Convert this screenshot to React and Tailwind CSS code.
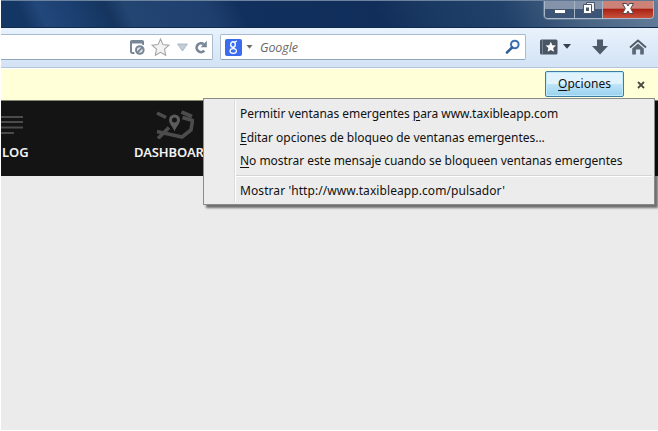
import React from "react";

function WindowControls() {
  return (
    <div className="mr-[4px] flex h-[18px] w-[110px] overflow-hidden rounded-b-[4px] border border-t-0 border-[#a9b7c8] shadow-[0_0_0_1px_#5f7793]">
      <div className="flex w-[30px] justify-center border-r border-[#a9b5c5] bg-linear-to-b from-[#8493aa] from-45% to-[#3c5475] to-50%">
        <svg width="14" height="17" viewBox="0 0 14 17">
          <rect x="1.500" y="8.500" width="11" height="4" fill="#fff" stroke="#4b5568" />
        </svg>
      </div>
      <div className="flex w-[28px] justify-center border-r border-[#a9b5c5] bg-linear-to-b from-[#8493aa] from-45% to-[#3c5475] to-50%">
        <svg width="14" height="17" viewBox="0 0 14 17">
          <path d="M4.500 1.500h8v9h-8z" fill="#eef0f3" stroke="#4b566a" />
          <path d="M1.500 3.500h8v9h-8z" fill="#fff" stroke="#4b566a" />
          <rect x="4" y="6.500" width="3" height="3.500" fill="#4b566a" />
        </svg>
      </div>
      <div className="flex flex-1 justify-center bg-linear-to-b from-[#cc8277] from-42% via-[#a91f13] via-48% to-[#c8503a]">
        <svg width="14" height="17" viewBox="0 0 14 17">
          <path d="M1.500 2.500h4L7 5l1.500-2.500h4L9.700 7.500l2.800 5h-4L7 10l-1.500 2.500h-4l2.800-5z" fill="#fff" stroke="#4e4650" strokeWidth="1" />
        </svg>
      </div>
    </div>
  );
}

function AddressBar() {
  return (
    <div className="flex h-[26px] w-[212px] items-center rounded-r-[2px] border border-l-0 border-[#a9bccf] border-b-[#8fa5bb] bg-white pl-[128px]">
      <svg width="16" height="16" viewBox="0 0 16 16" className="shrink-0">
        <path d="M5.500 14H3.500a1.500 1.500 0 0 1-1.500-1.500V3h12v3" fill="none" stroke="#788797" strokeWidth="2" />
        <path d="M1 3a2 2 0 0 1 2-2h10a2 2 0 0 1 2 2v1.500H1z" fill="#788797" />
        <circle cx="10.800" cy="11" r="4" fill="#e4e8ec" stroke="#fff" strokeWidth="4" />
        <circle cx="10.800" cy="11" r="3.800" fill="#e4e8ec" stroke="#788797" strokeWidth="2" />
        <path d="M8.200 13.600l5.200-5.200" stroke="#788797" strokeWidth="1.900" />
      </svg>
      <svg width="20" height="18" viewBox="0 0 20 18" className="ml-[6px] shrink-0">
        <path d="M9.500 1l2.400 5.600 6 .6-4.400 4 1.200 6.100-5.200-3-5.200 3 1.200-6.100-4.400-4 6-.6z" fill="#f3f3f3" stroke="#a6a6a6" strokeWidth="1.100" />
      </svg>
      <svg width="12" height="9" viewBox="0 0 12 9" className="ml-[6px] mt-[1px] shrink-0">
        <path d="M.6 1h9.800L5.500 8z" fill="#c3ced9" stroke="#a1afbd" strokeWidth=".8" />
      </svg>
      <svg width="14" height="14" viewBox="0 0 14 14" className="ml-[5px] shrink-0">
        <path d="M9.700 4.200A4.400 4.400 0 1 0 10.300 10.700" fill="none" stroke="#788797" strokeWidth="2.700" />
        <path d="M12.800.800v6.400H6.600z" fill="#788797" />
      </svg>
    </div>
  );
}

function SearchBox() {
  return (
    <div className="ml-[7px] flex h-[26px] w-[306px] items-center rounded-[2px] border border-[#a9bccf] border-b-[#8fa5bb] bg-white pl-[4px]">
      <div className="flex h-[17px] w-[17px] items-center justify-center rounded-[2px] bg-[#3a6cf0]">
        <svg width="11" height="15" viewBox="0 0 11 15" fill="none" stroke="#fff">
          <ellipse cx="5" cy="4.500" rx="2.300" ry="2.700" strokeWidth="1.400" />
          <ellipse cx="5.200" cy="11" rx="3.200" ry="2.400" strokeWidth="1.200" />
          <path d="M7 2l2-1M5 7.200l1.500 1.500" strokeWidth="1.200" />
        </svg>
      </div>
      <svg width="7" height="4" viewBox="0 0 7 4" className="ml-[4px]">
        <path d="M.5 0h6l-3 3.700z" fill="#6b6b6b" />
      </svg>
      <span className="ml-[7px] mt-[2px] w-[210px] font-['Open_Sans',sans-serif] text-[12.500px] italic tracking-[-0.100px] text-[#686868]">Google</span>
      <svg width="16" height="16" viewBox="0 0 16 16" className="ml-[35px] mt-[-1px]">
        <circle cx="9.800" cy="5.500" r="3.800" fill="#f5faff" stroke="#3a70b0" strokeWidth="2" />
        <path d="M7 8.500L2 13.500" stroke="#315f9e" strokeWidth="2.600" strokeLinecap="round" />
      </svg>
    </div>
  );
}

function ToolbarIcons() {
  return (
    <>
      <svg width="18" height="16" viewBox="0 0 18 16" className="ml-[14px]">
        <rect x="0" y=".500" width="17.500" height="15" rx="1.500" fill="#495663" />
        <path d="M2.500 1v14" stroke="#76838e" />
        <path d="M10.800 2.800l1.500 3.400 3.700.4-2.800 2.500.8 3.700-3.200-1.900-3.200 1.900.8-3.700-2.800-2.500 3.700-.4z" fill="#fff" />
      </svg>
      <svg width="8" height="5" viewBox="0 0 8 5" className="mb-[1px] ml-[5px]">
        <path d="M0 0h8L4 4.800z" fill="#333f4b" />
      </svg>
      <svg width="16" height="16" viewBox="0 0 16 16" className="ml-[21px]">
        <path d="M5 .5h6v6.500h5L8 15.500 0 7h5z" fill="#4d5b69" />
      </svg>
      <svg width="18" height="16" viewBox="0 0 18 16" className="ml-[21px]">
        <path d="M1 8.500l8-7 8 7" fill="none" stroke="#4d5a66" strokeWidth="1.800" />
        <path d="M3.200 9.500L9 4.600l5.800 4.900v6h-3.600V10.500H6.900v5H3.200z" fill="#5a6874" />
      </svg>
    </>
  );
}

const menuText = "ml-[4px] whitespace-nowrap font-['Noto_Sans',sans-serif] text-[12px] leading-[18px] text-[#111]";

function PopupMenu() {
  return (
    <div className="absolute left-[202px] top-[98px] flex h-[107px] w-[452px] border border-[#8b8b8b] bg-[#ececec] p-[2px] shadow-[3px_3px_2px_#00000088]">
      <div className="w-[29px] shrink-0 border-r border-[#dadada]" />
      <div className="flex flex-1 flex-col border-l border-white">
        <div className={menuText + " mt-[4px] h-[23.500px] tracking-[-0.050px]"}>
          Permitir ventanas emergentes <u className="underline-offset-2">p</u>ara www.taxibleapp.com
        </div>
        <div className={menuText + " h-[23.500px] tracking-[-0.030px]"}>
          <u className="underline-offset-2">E</u>ditar opciones de bloqueo de ventanas emergentes...
        </div>
        <div className={menuText + " h-[23px] tracking-[-0.040px]"}>
          <u className="underline-offset-2">N</u>o mostrar este mensaje cuando se bloqueen ventanas emergentes
        </div>
        <div className="h-[2px] shrink-0 border-b border-t border-b-white border-t-[#d5d5d5]" />
        <div className={menuText + " mt-[5px] tracking-[0.080px]"}>Mostrar 'http://www.taxibleapp.com/pulsador'</div>
      </div>
    </div>
  );
}

function SiteHeader() {
  return (
    <div className="flex h-[75px] overflow-hidden bg-[#141414] font-['Noto_Sans',sans-serif] text-[13px] font-semibold text-[#f2f2f2]">
      <div className="w-[133px]">
        <svg width="22" height="20" viewBox="0 0 22 20" className="mt-[14px]">
          <path d="M0 2h22M0 7h22M0 12.500h22M0 18h13" stroke="#4b4b4b" strokeWidth="2" />
        </svg>
        <div className="ml-[1px] mt-[8px] leading-[18px] tracking-[0.100px]">LOG</div>
      </div>
      <div className="w-[90px]">
        <svg width="38" height="30" viewBox="0 0 38 30" className="ml-[22px] mt-[8px]" fill="none" stroke="#4c4c4c" strokeWidth="3.600">
          <path d="M1 4l9 4.500M25.500 3l10.500 4.500M1 22.500L26 28l9-7 1.500-9.500-10-3M2 29.500l11-11" />
          <path d="M18.500 22.500c-1.500-4.500-5.500-8-5.500-11.500a5.500 5.500 0 0 1 11 0c0 3.500-4 7-5.500 11.500zM21 11a2.500 2.500 0 1 0-5 0 2.500 2.500 0 0 0 5 0z" fill="#5c5c5c" stroke="none" fillRule="evenodd" />
        </svg>
        <div className="mt-[4px] leading-[18px] tracking-[-0.100px]">DASHBOARD</div>
      </div>
    </div>
  );
}

export default function App() {
  return (
    <div className="relative h-[431px] w-[658px] overflow-hidden border-b border-l border-white bg-[#ebebeb]">
      <div className="flex h-[28px] justify-end border-b border-t border-b-[#112a50] border-t-[#6c83a0] bg-[linear-gradient(65deg,#153765_0%,#143664_4%,#22477a_7%,#1b3f70_12%,#15355f_17%,#234572_20%,#1f406f_32%,#12305d_37%,#112e5b_57%,#17355f_62%,#1a3963_66%,#21416a_76%,#4a6584_88%,#637d9b_100%)]">
        <WindowControls />
      </div>
      <div className="flex h-[40px] items-center border-b border-[#b4c5d8] bg-linear-to-b from-[#e9f2fc] to-[#d3e3f5] pb-[1px]">
        <AddressBar />
        <SearchBox />
        <ToolbarIcons />
      </div>
      <div className="flex h-[33px] justify-end border-b border-t border-b-[#858575] border-t-white bg-[#ffffd8] pt-[2px]">
        <div className="flex h-[26px] w-[79px] items-center justify-center rounded-[2px] border border-[#3b7ba6] bg-linear-to-b from-[#e0f3fd] from-48% via-[#bee4f8] via-52% to-[#98d1ef] font-['Noto_Sans',sans-serif] text-[12px] text-[#111] shadow-[inset_0_0_0_1px_#bdeaff]">
          <u className="underline-offset-2">O</u>pciones
        </div>
        <svg width="8" height="8" viewBox="0 0 8 8" className="ml-[13px] mr-[13px] mt-[10px]">
          <path d="M1 1l6 6M7 1L1 7" stroke="#4b4b42" strokeWidth="1.800" />
        </svg>
      </div>
      <SiteHeader />
      <PopupMenu />
    </div>
  );
}
